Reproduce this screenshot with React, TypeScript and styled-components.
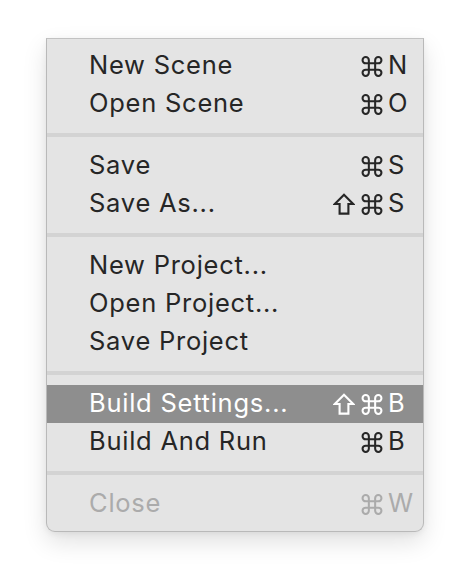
import React from "react";
import styled, { createGlobalStyle } from "styled-components";

const GlobalStyle = createGlobalStyle`
  html, body {
    margin: 0;
    padding: 0;
    background: #ffffff;
  }
  body {
    font-family: Inter, "Noto Sans", sans-serif;
  }
`;

const Page = styled.div`
  width: 470px;
  height: 584px;
  padding: 38px 0 0 46px;
  box-sizing: border-box;
`;

const Menu = styled.div`
  width: 378px;
  box-sizing: border-box;
  padding: 8px 0;
  background: #e4e4e4;
  border: 1px solid #b9b9b9;
  border-top-color: #c2c2c2;
  border-radius: 0 0 9px 9px;
  box-shadow: 0 10px 24px rgba(0, 0, 0, 0.12), 0 2px 6px rgba(0, 0, 0, 0.06);
  display: flex;
  flex-direction: column;
`;

const Item = styled.div<{ $highlighted?: boolean; $disabled?: boolean }>`
  height: 38px;
  box-sizing: border-box;
  padding: 0 0 3px 42px;
  display: grid;
  grid-template-columns: 1fr auto 35px;
  column-gap: 5px;
  align-items: center;
  font-size: 25.5px;
  line-height: 30px;
  letter-spacing: 0.75px;
  background: ${(p) => (p.$highlighted ? "#8e8e8e" : "transparent")};
  color: ${(p) =>
    p.$highlighted ? "#ffffff" : p.$disabled ? "#ababab" : "#262626"};
`;

const Label = styled.span`
  white-space: nowrap;
`;

const Modifiers = styled.span`
  display: flex;
  align-items: center;
  justify-content: flex-end;
  gap: 6px;
  padding-top: 3px;
`;

const Key = styled.span`
  text-align: left;
  letter-spacing: 0;
`;

const Separator = styled.div`
  height: 4px;
  margin: 10px 0;
  background: #d3d3d3;
`;

const CommandIcon = () => (
  <svg width="22" height="21" viewBox="2 2 20 20" fill="none" stroke="currentColor" strokeWidth="1.95">
    <path d="M15 6v12a3 3 0 1 0 3-3H6a3 3 0 1 0 3 3V6a3 3 0 1 0-3 3h12a3 3 0 1 0-3-3" />
  </svg>
);

const ShiftIcon = () => (
  <svg width="22" height="22" viewBox="0 0 22 22" fill="none" stroke="currentColor" strokeWidth="2.1" strokeLinejoin="miter">
    <path d="M11 1.8 L20.2 11 H15.4 V20.6 H6.6 V11 H1.8 Z" />
  </svg>
);

type Entry =
  | { label: string; shift?: boolean; cmd?: boolean; keyChar?: string; highlighted?: boolean; disabled?: boolean }
  | "sep";

const entries: Entry[] = [
  { label: "New Scene", cmd: true, keyChar: "N" },
  { label: "Open Scene", cmd: true, keyChar: "O" },
  "sep",
  { label: "Save", cmd: true, keyChar: "S" },
  { label: "Save As...", shift: true, cmd: true, keyChar: "S" },
  "sep",
  { label: "New Project..." },
  { label: "Open Project..." },
  { label: "Save Project" },
  "sep",
  { label: "Build Settings...", shift: true, cmd: true, keyChar: "B", highlighted: true },
  { label: "Build And Run", cmd: true, keyChar: "B" },
  "sep",
  { label: "Close", cmd: true, keyChar: "W", disabled: true },
];

const App = () => {
  return (
    <Page>
      <GlobalStyle />
      <Menu>
        {entries.map((e, i) =>
          e === "sep" ? (
            <Separator key={i} />
          ) : (
            <Item key={i} $highlighted={e.highlighted} $disabled={e.disabled}>
              <Label>{e.label}</Label>
              <Modifiers>
                {e.shift && <ShiftIcon />}
                {e.cmd && <CommandIcon />}
              </Modifiers>
              <Key>{e.keyChar}</Key>
            </Item>
          )
        )}
      </Menu>
    </Page>
  );
};

export default App;
